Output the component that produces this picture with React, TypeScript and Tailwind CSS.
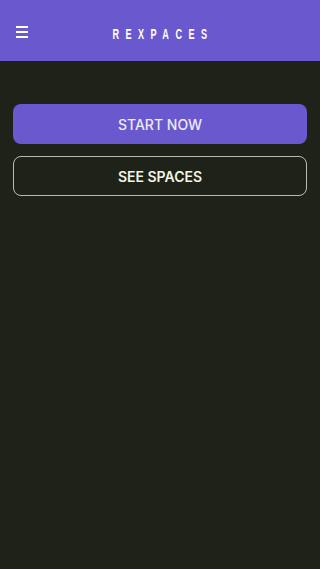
import React from 'react';

export default function App() {
  return (
    <div className="min-h-[569px] w-full bg-[#1f2219] font-['Inter',sans-serif]">
      {/* Header */}
      <header className="relative flex h-[61px] items-center justify-center bg-[#6a58cf] pt-[6px]">
        <button className="absolute left-[16px] top-[26px] flex flex-col gap-[3px]">
          <span className="block h-[2px] w-[12px] bg-white" />
          <span className="block h-[2px] w-[12px] bg-white" />
          <span className="block h-[2px] w-[12px] bg-white" />
        </button>
        <h1 className="scale-x-[0.65] pl-[0.71em] text-[14px] font-bold leading-none tracking-[0.71em] text-white font-['Liberation_Sans',sans-serif]">
          REXPACES
        </h1>
      </header>

      {/* Actions */}
      <div className="flex flex-col gap-[12px] px-[13px] pt-[43px]">
        <button className="flex h-[40px] w-full items-center justify-center rounded-[8px] bg-[#6a58cf] text-[14px] font-medium text-[#ececf6]">
          START NOW
        </button>
        <button className="flex h-[40px] w-full items-center justify-center rounded-[8px] border border-[#b9bcae] text-[14px] font-semibold text-[#f4f4e4]">
          SEE SPACES
        </button>
      </div>
    </div>
  );
}
